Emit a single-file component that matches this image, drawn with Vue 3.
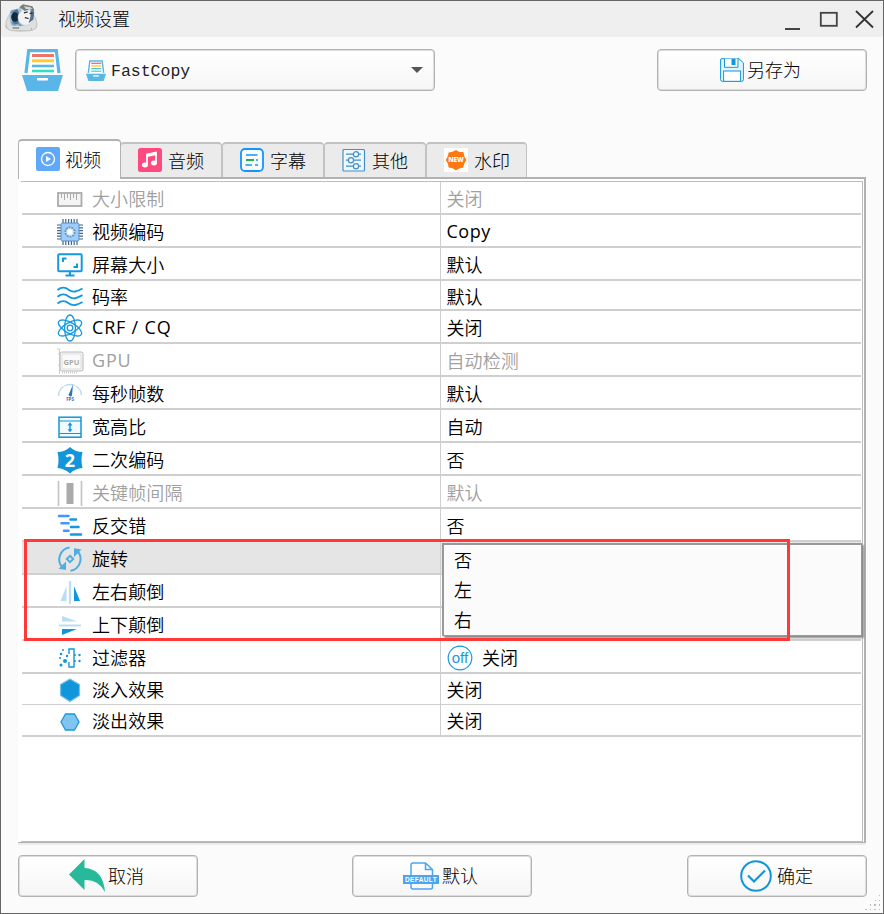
<script setup>
const tabs = [
  { icon: 'play', label: '视频' },
  { icon: 'music', label: '音频' },
  { icon: 'sub', label: '字幕' },
  { icon: 'sliders', label: '其他' },
  { icon: 'new', label: '水印' },
]
const rows = [
  { icon: 'ruler', label: '大小限制', value: '关闭', disabled: true },
  { icon: 'chip', label: '视频编码', value: 'Copy' },
  { icon: 'screen', label: '屏幕大小', value: '默认' },
  { icon: 'waves', label: '码率', value: '默认', size: 'h30' },
  { icon: 'atom', label: 'CRF / CQ', value: '关闭' },
  { icon: 'gpu', label: 'GPU', value: '自动检测', disabled: true },
  { icon: 'fps', label: '每秒帧数', value: '默认' },
  { icon: 'aspect', label: '宽高比', value: '自动' },
  { icon: 'two', label: '二次编码', value: '否' },
  { icon: 'key', label: '关键帧间隔', value: '默认', disabled: true },
  { icon: 'deint', label: '反交错', value: '否' },
  { icon: 'rotate', label: '旋转', value: '', selected: true },
  { icon: 'fliph', label: '左右颠倒', value: '' },
  { icon: 'flipv', label: '上下颠倒', value: '' },
  { icon: 'filter', label: '过滤器', value: '关闭', off: true },
  { icon: 'fadein', label: '淡入效果', value: '关闭', size: 'h31' },
  { icon: 'fadeout', label: '淡出效果', value: '关闭', size: 'h32' },
]
const options = ['否', '左', '右']
const chipPins = [7, 9.8, 12.6, 15.4, 18.2, 21]
const isLatin = (s) => /^[A-Z]/.test(s)
</script>

<template>
  <div class="window">
    <header class="titlebar">
      <svg class="app-icon" viewBox="0 0 36 30">
        <ellipse cx="17" cy="23" rx="17" ry="6" fill="#c9cbcb" />
        <path d="M1 19Q3 11 8 7L28 8Q33 13 34 21Q33 28 26 28H8Q1 28 1 19Z" fill="#dedfdf" stroke="#b4b6b6" stroke-width=".7" />
        <path d="M6 6L17 4L20 23L7 23Q3 14 6 6Z" fill="#a3bdd3" />
        <path d="M8 7L13 5L16 12L14 21L8 21Z" fill="#4c7599" />
        <ellipse cx="10.5" cy="13.5" rx="4" ry="5" fill="#122b3c" />
        <path d="M7 19L11 22M14 20L17 23M6 9L9 7" stroke="#5f95c4" stroke-width="1.5" />
        <circle cx="22" cy="14" r="8.3" fill="#f1f2f1" stroke="#c3c8ca" stroke-width=".6" />
        <path d="M15 3L19 0L29 2L31 6L30 8L26 5L21 7L18 5Z" fill="#777d80" />
        <path d="M20 2L27 3L29 5L22 5Z" fill="#d2d5d5" />
        <path d="M27 6L31 8L30 16L25 20L27 13Z" fill="#536d8d" />
        <path d="M20 9L24 8M26 10L29 9M21 14L25 15" stroke="#252c31" stroke-width="1.3" />
        <path d="M8 25H15" stroke="#969999" stroke-width="2" />
        <circle cx="28" cy="26" r=".8" fill="#80bd59" />
      </svg>
      <span class="title">视频设置</span>
      <svg class="win-buttons" viewBox="0 0 90 22">
        <path d="M1 20H16" stroke="#444" stroke-width="2" />
        <rect x="36.8" y="3.8" width="16" height="13" fill="none" stroke="#444" stroke-width="1.8" />
        <path d="M72 2L89 18.5M89 2L72 18.5" stroke="#333" stroke-width="1.8" />
      </svg>
    </header>

    <section class="toolbar">
      <svg class="drawer" viewBox="0 0 42 42">
        <path d="M4 24L6.7 1.6H34.3L37 24" fill="#fff" stroke="#5ab5e9" stroke-width="3.2" />
        <path d="M10 6.5H32" stroke="#ef7468" stroke-width="3" />
        <path d="M10 11.8H32" stroke="#ffcb31" stroke-width="3" />
        <path d="M10 17H32" stroke="#5ab5e9" stroke-width="2.6" />
        <path d="M10 22H32" stroke="#31dfc4" stroke-width="2.6" />
        <path d="M0 26H41L36 42H5Z" fill="#5ab5e9" />
        <rect x="15" y="29" width="11" height="2.6" rx=".8" fill="#fff" />
      </svg>
      <div class="combo">
        <svg class="drawer-small" viewBox="0 0 42 44">
          <path d="M5 27L8 2H34L37 27" fill="#fff" stroke="#5ab5e9" stroke-width="3" />
          <path d="M11 7H32" stroke="#ef7468" stroke-width="3" />
          <path d="M11 12.5H32" stroke="#ffcb31" stroke-width="3" />
          <path d="M11 18H32" stroke="#5ab5e9" stroke-width="2.6" />
          <path d="M11 23.5H32" stroke="#31dfc4" stroke-width="2.6" />
          <path d="M0 29H42L37 44H5Z" fill="#5ab5e9" />
          <rect x="15" y="32" width="12" height="2.8" fill="#fff" />
        </svg>
        <span class="combo-text">FastCopy</span>
        <i class="arrow"></i>
      </div>
      <button class="btn save">
        <svg class="save-icon" viewBox="0 0 24 24" fill="none" stroke="#1296db">
          <path d="M1 .7H19L23.4 4.8V21.5Q23.4 23.4 21.5 23.4H2.5Q.6 23.4 .6 21.5V2Z" fill="#e3f4fd" />
          <path d="M4.5 .7V9.3H18V.7" fill="#fff" />
          <rect x="11.5" y="1" width="4" height="6" fill="#1296db" stroke="none" />
          <rect x="3.6" y="13" width="17" height="10.3" fill="#fff" />
        </svg>
        <span>另存为</span>
      </button>
    </section>

    <nav class="tabs">
      <div v-for="(t, i) in tabs" :key="t.label" class="tab" :class="{ active: i === 0 }">
        <svg class="tab-icon" viewBox="0 0 24 24">
          <template v-if="t.icon === 'play'">
            <rect width="24" height="24" rx="2" fill="#60a9f9" />
            <circle cx="12" cy="12" r="6.5" fill="none" stroke="#fff" stroke-width="1.3" />
            <path d="M10 9L15 12L10 15Z" fill="#fff" />
          </template>
          <template v-else-if="t.icon === 'music'">
            <rect width="24" height="24" rx="2.5" fill="#ff4a80" />
            <path d="M9 16.5V6.5L18 4.5V14.5" fill="none" stroke="#fff" stroke-width="1.8" />
            <path d="M9 7.5L18 5.5" stroke="#fff" stroke-width="3" />
            <ellipse cx="7" cy="17" rx="3" ry="2.4" fill="#fff" /><ellipse cx="16" cy="15" rx="3" ry="2.4" fill="#fff" />
          </template>
          <template v-else-if="t.icon === 'sub'">
            <rect x="1" y="1" width="22" height="22" rx="4" fill="#f8fcff" stroke="#1296fc" stroke-width="1.8" />
            <path d="M6 7H17.5M5.5 17H12M15 17H18M16 12H18" stroke="#1296fc" stroke-width="1.7" />
            <path d="M6 12H14" stroke="#1bac35" stroke-width="1.9" />
          </template>
          <template v-else-if="t.icon === 'sliders'">
            <g fill="#edf7fc" stroke="#468fc6" stroke-width="1.2">
              <rect x="1" y="1.5" width="21.5" height="21.5" rx="1" />
              <path d="M4 6.2H19M4 12.2H19M4 18.2H19" />
              <circle cx="14" cy="6.2" r="2.6" /><circle cx="9" cy="12.2" r="2.6" /><circle cx="14" cy="18.2" r="2.6" />
            </g>
          </template>
          <template v-else>
            <rect width="24" height="24" fill="#fff" />
            <path d="M12 2L15.4 4H19.5L20.4 8.5L22.4 12L20.2 15.7L19.2 19.5L15.2 20.4L12 22.4L8.5 20.3L4.7 19.4L3.8 15.5L1.8 12L3.8 8.3L4.6 4.4L8.6 3.8Z" fill="#ff7912" />
            <text x="12" y="14.4" text-anchor="middle" class="new-text">NEW</text>
          </template>
        </svg>
        <span>{{ t.label }}</span>
      </div>
    </nav>

    <main class="panel">
      <div class="tree">
        <div v-for="r in rows" :key="r.label" class="row" :class="[r.size, { disabled: r.disabled, selected: r.selected }]">
          <div class="name">
            <svg class="row-icon" viewBox="0 0 28 28">
              <template v-if="r.icon === 'ruler'">
                <rect x="2" y="8" width="23.5" height="13" fill="#f4f4f4" stroke="#ababab" stroke-width="1.8" />
                <path d="M5.5 9V13M8.5 9V15M11.5 9V13M14.5 9V15M17.5 9V13M20.5 9V15" stroke="#aaa" stroke-width="1" />
              </template>
              <template v-else-if="r.icon === 'chip'">
                <path v-for="p in chipPins" :key="p" :d="`M${p} 1V27M1 ${p}H27`" stroke="#41688c" stroke-width="1.2" />
                <rect x="5" y="5" width="18" height="18" rx="1.5" fill="#9bccfb" stroke="#5f8db8" />
                <circle cx="14" cy="14" r="4.6" fill="#d9eeff" stroke="#6d93b8" stroke-width="1.8" stroke-dasharray="2 .8" />
                <rect x="12" y="12" width="4" height="4" fill="#fff" />
              </template>
              <g v-else-if="r.icon === 'screen'" fill="none" stroke="#1499df">
                <rect x="2.2" y="3.2" width="23.5" height="17" rx="1" stroke-width="2" />
                <path d="M7 11V7.5H10.5M17.5 16H21V12.5" stroke-width="2" />
                <path d="M14 20V24M9.5 24.5H18.5" stroke-width="2.2" />
              </g>
              <g v-else-if="r.icon === 'waves'" fill="none" stroke="#1499df" stroke-width="1.9">
                <path d="M1.5 8C6 4.5 9 5 13 8S21 9.5 26.5 6.5M1.5 14.7C6 11.2 9 11.7 13 14.7S21 16.2 26.5 13.2M1.5 21.5C6 18 9 18.500 13 21.5S21 23 26.5 20" />
              </g>
              <g v-else-if="r.icon === 'atom'" fill="none" stroke="#1499df" stroke-width="1.3">
                <ellipse cx="14" cy="14" rx="5.4" ry="13" />
                <ellipse cx="14" cy="14" rx="5.4" ry="13" transform="rotate(60 14 14)" />
                <ellipse cx="14" cy="14" rx="5.4" ry="13" transform="rotate(120 14 14)" />
                <circle cx="14" cy="14" r="2.8" />
              </g>
              <template v-else-if="r.icon === 'gpu'">
                <path d="M1 2H3.5V27M3.5 7H2M3.5 18H2" fill="none" stroke="#ccc" />
                <rect x="4" y="5" width="23" height="19" rx="2" fill="#f6f6f6" stroke="#bababa" />
                <rect x="6" y="7" width="19" height="15" rx="1" fill="#fafafa" stroke="#dedede" />
                <path d="M6 25.5H22" stroke="#ccc" stroke-width="2" stroke-dasharray="1 1" />
                <text x="15.5" y="17.5" text-anchor="middle" class="gpu-text">GPU</text>
              </template>
              <template v-else-if="r.icon === 'fps'">
                <path d="M2.5 16A11.5 11.5 0 0 1 14 4.5A11.5 11.5 0 0 1 25.5 16" fill="none" stroke="#b9d9ed" stroke-width="1.3" stroke-dasharray="11 1" />
                <path d="M12.5 15L17 4.5L16 15.5Q14 17.5 12.5 15Z" fill="#2877b9" />
                <text x="14" y="20.5" text-anchor="middle" class="fps-text">FPS</text>
              </template>
              <g v-else-if="r.icon === 'aspect'" fill="none" stroke="#1296db">
                <rect x="3" y="4.2" width="22" height="20" stroke-width="1.5" fill="#f0faff" />
                <path d="M3 8H25M3 20.5H25" stroke-width="1.2" /><path d="M14 11V18" stroke-width="1.5" />
                <path d="M11.5 12.5L14 9.3L16.5 12.5ZM11.5 16.2L14 19.2L16.5 16.2Z" fill="#1296db" stroke="none" />
              </g>
              <template v-else-if="r.icon === 'two'">
                <path d="M14 1Q19 6 26.5 6Q24.5 14 26.5 22Q19 22.5 14 27.5Q8.5 22.5 1.5 22Q3.5 14 1.5 6Q9 6 14 1Z" fill="#1296db" />
                <text x="14" y="20.5" text-anchor="middle" class="two-text">2</text>
              </template>
              <template v-else-if="r.icon === 'key'">
                <path d="M2.5 2V27M25.5 2V27" stroke="#c6c6c6" stroke-width="1.7" />
                <rect x="10.5" y="4" width="7" height="21" fill="#ababab" />
              </template>
              <g v-else-if="r.icon === 'deint'" fill="none" stroke-linecap="round" stroke-width="2.6">
                <path d="M3 4H12.5M5.5 11.3H12.5M8 18.8H12.5" stroke="#4098ff" />
                <path d="M14.5 7.5H20M15 15H22.5M15 22.5H25" stroke="#1499df" />
              </g>
              <g v-else-if="r.icon === 'rotate'" fill="none" stroke="#50ade1" stroke-width="2">
                <path d="M13.5 2.5A12 12 0 0 0 6.5 22.5" /><path d="M14.5 25.8A12 12 0 0 0 21.5 6" />
                <path d="M10 16.5V25L2.5 23.8ZM18 12V3.2L25.5 4.5Z" fill="#50ade1" stroke="none" />
                <path d="M14 10.8L17.2 14L14 17.2L10.8 14Z" />
              </g>
              <template v-else-if="r.icon === 'fliph'">
                <path d="M4.5 23L10.5 8V23Z" fill="#b9def3" /><path d="M14 3V26" stroke="#b9def3" stroke-width="2.2" /><path d="M18 8L24 23H18Z" fill="#1296db" />
              </template>
              <template v-else-if="r.icon === 'flipv'">
                <path d="M6 5L21 10.5H6Z" fill="#b9def3" /><path d="M3 14.5H25" stroke="#b9def3" stroke-width="2" /><path d="M6 18H21L6 24Z" fill="#1296db" />
              </template>
              <template v-else-if="r.icon === 'filter'">
                <path d="M13 10V5H18V23H13V18" fill="none" stroke="#1296db" stroke-width="1.4" />
                <g fill="#1296db"><circle cx="5" cy="10" r="1.3" /><circle cx="7" cy="6" r="1" /><circle cx="5" cy="21" r="1.5" /><circle cx="4" cy="14" r="1" /><circle cx="9" cy="17" r="2" /><circle cx="11" cy="12" r="1.2" /><circle cx="19" cy="17" r="1" /><circle cx="19" cy="11" r="1" /><circle cx="23.5" cy="11" r="1.2" /><circle cx="23.5" cy="17" r="1.2" /></g>
              </template>
              <path v-else-if="r.icon === 'fadein'" d="M14 3L23.5 8.5V19.5L14 25.5L4.5 19.5V8.5Z" fill="#1296db" stroke="#78bfe9" stroke-width="1.2" />
              <path v-else d="M9.5 7H18.5L23 15L18.5 23H9.5L5 15Z" fill="#80c5ef" stroke="#1c98dc" stroke-width="1.3" />
            </svg>
            <span :class="{ latin: isLatin(r.label) }">{{ r.label }}</span>
          </div>
          <div class="value">
            <svg v-if="r.off" class="off-icon" viewBox="0 0 26 26">
              <circle cx="13" cy="13" r="11.8" fill="#fff" stroke="#1b98dc" stroke-width="1.2" />
              <text x="13" y="17.5" text-anchor="middle" class="off-text">off</text>
            </svg>
            <span :class="{ latin: isLatin(r.value) }">{{ r.value }}</span>
          </div>
        </div>
      </div>
    </main>

    <footer class="footer">
      <button class="btn action cancel">
        <svg class="back-icon" viewBox="0 0 36 34">
          <path d="M0 15.5L15.5 0V9Q34 10 36 33Q29 20 15.5 21V31Z" fill="#26b99a" />
        </svg>
        <span>取消</span>
      </button>
      <button class="btn action default">
        <svg class="default-icon" viewBox="0 0 36 28">
          <path d="M8 14V3Q8 1 10 1H22.5L29.5 7.5V14M8 20V25Q8 27 10 27H27.5Q29.5 27 29.5 25V20M22.5 1V7.5H29.5" fill="none" stroke="#4da5ee" stroke-width="1.5" />
          <rect y="13" width="36" height="9" fill="#4da5ee" />
          <text x="18" y="20" text-anchor="middle" class="default-text">DEFAULT</text>
        </svg>
        <span>默认</span>
      </button>
      <button class="btn action ok">
        <svg class="ok-icon" viewBox="0 0 32 32" fill="none" stroke="#1296db">
          <circle cx="16" cy="16" r="14.8" stroke-width="2" /><path d="M8 15.5L14 21.5L25 10.5" stroke-width="2.2" />
        </svg>
        <span>确定</span>
      </button>
    </footer>

    <div class="popup"><div v-for="o in options" :key="o" class="option">{{ o }}</div></div>
    <div class="highlight"></div>
    <svg class="grip" viewBox="0 0 16 16" fill="#bdbdbd">
      <path d="M14 0h1v1h-1zM10 5h1v1h-1zM14 5h1v1h-1zM5 9h1v2h-1zM9 9h2v2H9zM14 9h1v2h-1zM0 14h2v1H0zM5 14h1v1h-1zM9 14h2v1H9zM14 14h1v1h-1z" />
    </svg>
  </div>
</template>

<style>
body { margin: 0; overflow: hidden; }
</style>
<style scoped>
* { box-sizing: border-box; }
.window { position: relative; display: flex; flex-direction: column; width: 884px; height: 914px; border: 1px solid #666; background: #fbfbfb; color: #000; font: 18px/24px "Noto Sans CJK SC", sans-serif; font-weight: 300; overflow: hidden; }
svg { display: block; flex: none; overflow: visible; }
.titlebar { display: flex; height: 36px; padding: 0 9px 0 4px; background: #efefef; border-radius: 3px; flex: none; }
.app-icon { width: 34px; height: 29px; margin-top: 3px; }
.title { margin: 5px 0 0 19px; }
.win-buttons { width: 90px; height: 22px; margin: 8px 0 0 auto; }
.toolbar { display: flex; height: 102px; padding: 12px 16px 0 21px; flex: none; }
.drawer { width: 42px; height: 42px; margin-right: 11px; }
.combo, .btn { height: 42px; border: 1px solid #b2b2b2; border-radius: 4px; background: linear-gradient(#fff, #f6f6f6); box-shadow: inset 0 0 0 1px #ddd; }
.combo { display: flex; align-items: center; width: 360px; padding: 0 11px 0 10px; }
.drawer-small { width: 20px; height: 21px; }
.combo-text { margin: 3px 0 0 5px; font: 16.5px/24px "Liberation Mono", monospace; color: #222; }
.arrow { margin-left: auto; border: 6px solid transparent; border-top-color: #555; border-bottom: 0; }
.btn { display: flex; align-items: center; padding: 0; color: #000; font: inherit; }
.btn span { margin-bottom: 2px; }
.save { width: 210px; margin-left: auto; padding-left: 62px; }
.save-icon { width: 24px; height: 24px; margin-right: 3px; }
.tabs { display: flex; align-items: flex-end; height: 40px; padding-left: 17px; flex: none; position: relative; z-index: 1; }
.tab { display: flex; align-items: center; width: 102px; height: 35px; padding: 0 0 1px 17px; border: solid #c2c2c2; border-width: 2px 1px 0; border-radius: 4px 4px 0 0; background: #ebebeb; margin-bottom: 2px; }
.tab.active { width: 103px; height: 40px; margin: 0 -1px 0 0; padding-bottom: 2px; background: #fff; border-color: #b2b2b2; position: relative; }
.tab:last-child { width: 101px; }
.tab-icon { width: 24px; height: 24px; margin-right: 6px; }
.active .tab-icon { margin-right: 5px; }
.new-text { font: 800 6.5px "Open Sans", sans-serif; fill: #fff; }
.panel { width: 848px; height: 666px; margin: -2px 0 0 17px; padding: 2px 1px 1px 3px; border: solid #b2b2b2; border-width: 2px 2px 1px 0; background: #fff; box-shadow: 0 2px 0 #ececec; flex: none; }
.tree { height: 661px; border: solid #bcbcbc; border-width: 1px 1px 1px 0; padding: 0 1px 0 1px; }
.row { display: flex; height: 33px; border-bottom: 2px solid #cfcfcf; font-family: "Noto Sans CJK SC", sans-serif; font-weight: 350; }
.name, .value { display: flex; align-items: center; letter-spacing: .1px; }
.latin { font-family: "Open Sans", sans-serif; font-weight: 400; letter-spacing: .5px; }
.name .latin { letter-spacing: .8px; }
.name { width: 418px; padding-left: 34px; flex: none; }
.value { flex: 1; border-left: 1px solid #cfcfcf; padding-left: 5.5px; }
.row-icon { width: 28px; height: 28px; margin-right: 8px; position: relative; top: 1px; }
.disabled { color: #a0a0a0; }
.selected { background: #e5e5e5; }
.h30 { height: 30px; }
.h30 span { margin-top: 1px; }
.h31 { height: 31px; border-bottom-width: 1px; }
.h32 { height: 32px; }
.gpu-text { font: bold 7.5px "Noto Sans", sans-serif; letter-spacing: 0; fill: #aaa; }
.fps-text { font: bold 4.5px "Noto Sans", sans-serif; letter-spacing: 0; fill: #2877b9; }
.two-text { font: bold 18px "Open Sans", sans-serif; fill: #fff; }
.off-icon { width: 26px; height: 26px; margin-right: 9.5px; position: relative; top: 1px; }
.off-text { font: 15px "Liberation Sans", sans-serif; fill: #1b98dc; }
.footer { display: flex; justify-content: space-between; padding: 12px 16px 0 17px; }
.action { width: 180px; }
.cancel { padding-left: 50px; }
.back-icon { width: 36px; height: 34px; margin-right: 3px; }
.default { padding-left: 50px; margin-right: 1px; }
.default-icon { width: 36px; height: 28px; margin-right: 3px; }
.default-text { font: bold 6.5px "Liberation Sans", sans-serif; letter-spacing: .35px; fill: #fff; }
.ok { padding-left: 52px; }
.ok-icon { width: 32px; height: 32px; margin-right: 5px; }
.popup { position: absolute; left: 441px; top: 542px; width: 420px; height: 93px; padding: 0 10px; border: 2px solid #999; border-right-width: 1px; border-bottom-width: 1px; background: #fbfbfb; box-shadow: 2px 2px 2px #888; z-index: 2; }
.option { height: 30px; line-height: 28px; font-weight: 350; }
.highlight { position: absolute; left: 23px; top: 538px; width: 766px; height: 102px; border: 3px solid #ff3838; z-index: 3; }
.grip { position: absolute; left: 864px; top: 894px; width: 16px; height: 16px; }
</style>
